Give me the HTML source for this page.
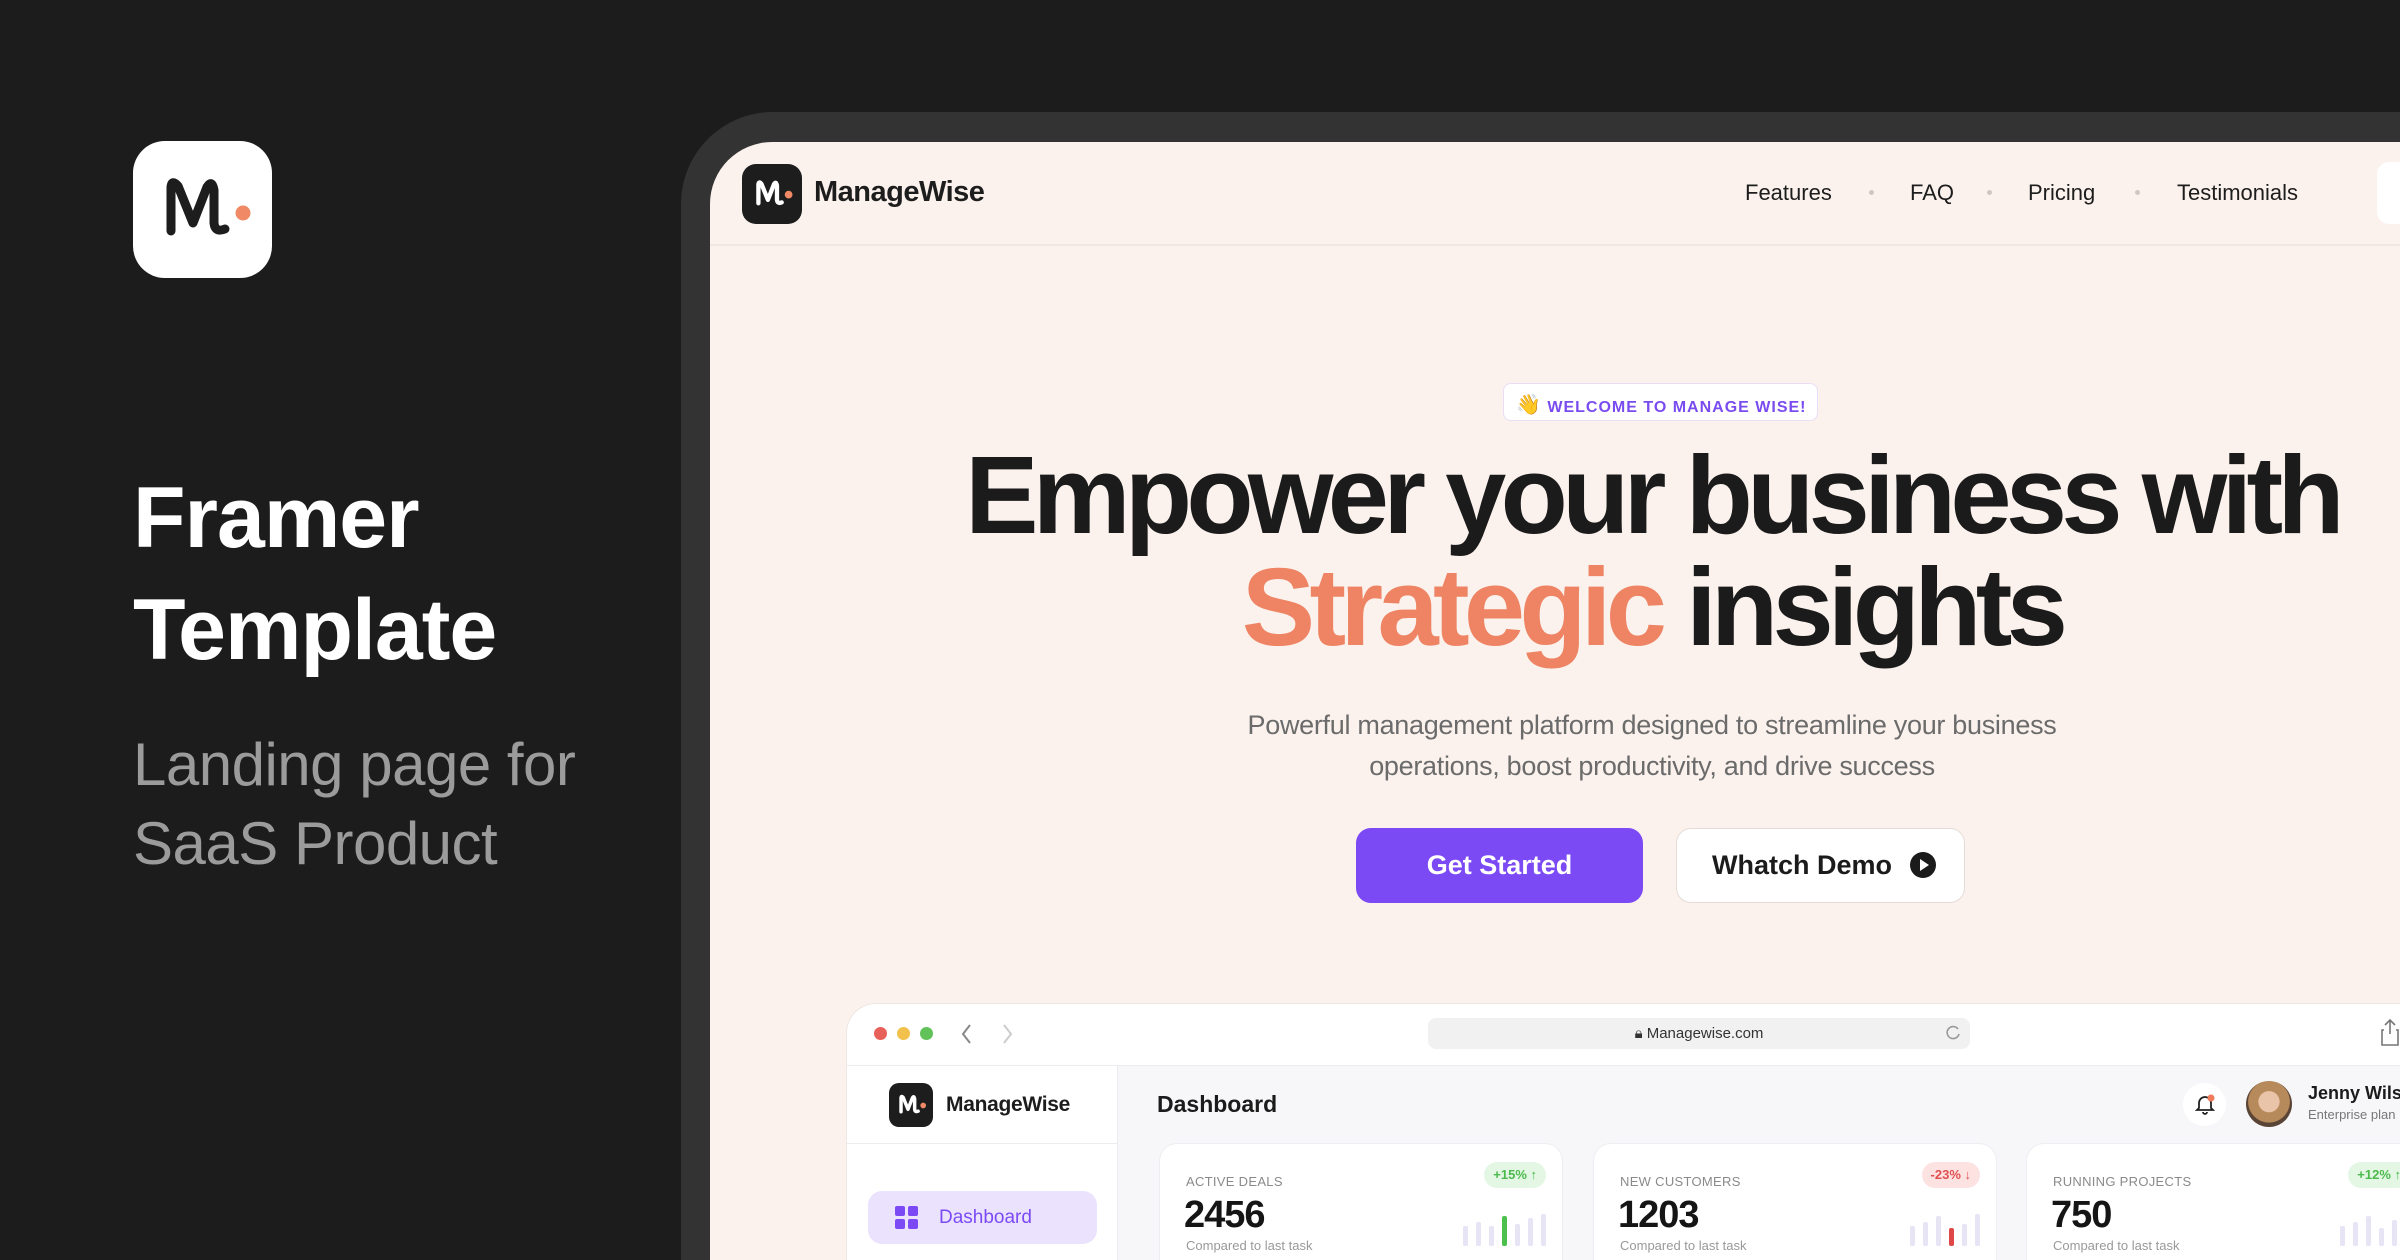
<!DOCTYPE html>
<html style="width:2400px;height:1260px;overflow:hidden"><head><meta charset="utf-8"><style>
*{margin:0;padding:0;box-sizing:border-box}
body{width:2400px;height:1260px;background:#1c1c1c;position:relative;overflow:hidden;font-family:"Liberation Sans",sans-serif}
.a{position:absolute}
.nav{font-size:22px;color:#1d1d1d;top:180px}
.dot{width:5px;height:5px;border-radius:50%;background:#cfc7c3;top:190px}
.card{background:#fff;border-radius:18px 18px 0 0;border:1px solid #eeeef2;border-bottom:none;width:404px;height:117px;top:1143px;overflow:hidden}
.lbl{font-size:13px;color:#8a8a8a;left:26px;top:30px;letter-spacing:.3px}
.num{font-size:38px;font-weight:bold;color:#151515;left:24px;top:50px;letter-spacing:-1px}
.cmp{font-size:13px;color:#999;left:26px;top:94px}
.pill{top:18px;right:16px;height:26px;border-radius:13px;font-size:13px;font-weight:bold;padding:5px 9px}
.bars{right:16px;top:68px;height:34px;display:flex;align-items:flex-end;gap:8px}
.bars i{display:block;width:5px;background:#e6e4f5;border-radius:2px}
</style></head><body>

<div class="a" style="left:133px;top:141px;width:139px;height:137px;background:#fff;border-radius:32px">
<svg width="139" height="137" viewBox="0 0 139 137"><path d="M38 90 L38 46 Q39 38 45 45 L60 82 L74 46 Q79 38 81 49 L81 82 Q82 92 92 88" fill="none" stroke="#1d1d1d" stroke-width="9" stroke-linecap="round" stroke-linejoin="round"/><circle cx="110" cy="72" r="7.5" fill="#f08a66"/></svg></div>

<div class="a" style="left:133px;top:462px;font-size:86px;line-height:112px;color:#fff;font-weight:bold;letter-spacing:-1px">Framer<br>Template</div>
<div class="a" style="left:133px;top:725px;font-size:60px;line-height:79px;color:#9b9b9b;letter-spacing:-.5px">Landing page for<br>SaaS Product</div>

<div class="a" style="left:681px;top:112px;width:1719px;height:1148px;background:#333;border-radius:92px 0 0 0"></div>
<div class="a" style="left:710px;top:142px;width:1690px;height:1118px;background:#fbf2ed;border-radius:62px 0 0 0"></div>

<div class="a" style="left:742px;top:164px;width:60px;height:60px;background:#1d1d1d;border-radius:14px">
<svg width="60" height="60" viewBox="0 0 139 137"><path d="M38 90 L38 46 Q39 38 45 45 L60 82 L74 46 Q79 38 81 49 L81 82 Q82 92 92 88" fill="none" stroke="#fff" stroke-width="10" stroke-linecap="round" stroke-linejoin="round"/><circle cx="108" cy="70" r="9" fill="#f08a66"/></svg></div>
<div class="a" style="left:814px;top:176px;font-size:29px;font-weight:bold;color:#1d1d1d;letter-spacing:-.5px">ManageWise</div>
<div class="a nav" style="left:1745px">Features</div>
<div class="a dot" style="left:1869px"></div>
<div class="a nav" style="left:1910px">FAQ</div>
<div class="a dot" style="left:1987px"></div>
<div class="a nav" style="left:2028px">Pricing</div>
<div class="a dot" style="left:2135px"></div>
<div class="a nav" style="left:2177px">Testimonials</div>
<div class="a" style="left:2377px;top:162px;width:23px;height:62px;background:#fff;border-radius:12px 0 0 12px"></div>
<div class="a" style="left:710px;top:244px;width:1690px;height:2px;background:#f1e7e2"></div>

<div class="a" style="left:1503px;top:383px;width:315px;height:38px;background:#fff;border:1px solid #e8def7;border-radius:8px;font-size:16px;font-weight:bold;color:#7a4cf0;padding:9px 0 0 12px;letter-spacing:1px;white-space:nowrap"><span style="font-size:20px;position:relative;top:-1px">👋</span> WELCOME TO MANAGE WISE!</div>

<div class="a" style="left:852px;width:1600px;top:440px;text-align:center;font-size:110px;line-height:112px;font-weight:bold;color:#1b1b1b;letter-spacing:-5.7px;white-space:nowrap">Empower your business with<br><span style="color:#ee8463">Strategic</span> insights</div>

<div class="a" style="left:1052px;width:1200px;top:705px;text-align:center;font-size:27px;line-height:41px;color:#6b6b6b;letter-spacing:-.3px">Powerful management platform designed to streamline your business<br>operations, boost productivity, and drive success</div>

<div class="a" style="left:1356px;top:828px;width:287px;height:75px;background:#7b4af5;border-radius:15px;color:#fff;font-size:27px;font-weight:bold;text-align:center;line-height:75px">Get Started</div>
<div class="a" style="left:1676px;top:828px;width:289px;height:75px;background:#fff;border:1.5px solid #e4dcd8;border-radius:15px;color:#1b1b1b;font-size:27px;font-weight:bold;line-height:72px;padding-left:35px">Whatch Demo <span style="display:inline-block;width:26px;height:26px;border-radius:50%;background:#1b1b1b;vertical-align:-4px;margin-left:10px;position:relative"><span style="position:absolute;left:10px;top:7px;border-left:9px solid #fff;border-top:6px solid transparent;border-bottom:6px solid transparent"></span></span></div>

<div class="a" style="left:846px;top:1003px;width:1554px;height:257px;background:#fff;border-radius:30px 0 0 0;border:1px solid #efe7e3;border-bottom:none;border-right:none;overflow:hidden">
 <div class="a" style="left:0;top:61px;width:1554px;height:196px;background:#f7f7f9;border-top:1px solid #ececef"></div>
 <div class="a" style="left:0;top:62px;width:271px;height:195px;background:#fff;border-right:1px solid #ececef"></div>
</div>
<div class="a" style="left:874px;top:1027px;width:13px;height:13px;border-radius:50%;background:#e8605a"></div>
<div class="a" style="left:897px;top:1027px;width:13px;height:13px;border-radius:50%;background:#f2c14b"></div>
<div class="a" style="left:920px;top:1027px;width:13px;height:13px;border-radius:50%;background:#62c25a"></div>
<svg class="a" style="left:960px;top:1022px" width="60" height="24"><path d="M10 3 L3 12 L10 21" stroke="#888" stroke-width="2" fill="none"/><path d="M44 3 L51 12 L44 21" stroke="#ccc" stroke-width="2" fill="none"/></svg>
<div class="a" style="left:1428px;top:1018px;width:542px;height:31px;background:#f1f1f2;border-radius:8px;text-align:center;font-size:15px;color:#333;line-height:31px">🔒︎ Managewise.com</div>
<svg class="a" style="left:1944px;top:1024px" width="18" height="18"><path d="M14 5 A6 6 0 1 0 15 10" stroke="#999" stroke-width="1.6" fill="none"/></svg>
<svg class="a" style="left:2380px;top:1018px" width="20" height="30"><path d="M10 2 V16 M5 7 L10 2 L15 7 M4 12 H2 V27 H18 V12 H16" stroke="#777" stroke-width="1.6" fill="none"/></svg>

<div class="a" style="left:889px;top:1083px;width:44px;height:44px;background:#1d1d1d;border-radius:10px">
<svg width="44" height="44" viewBox="0 0 139 137"><path d="M38 90 L38 46 Q39 38 45 45 L60 82 L74 46 Q79 38 81 49 L81 82 Q82 92 92 88" fill="none" stroke="#fff" stroke-width="11" stroke-linecap="round" stroke-linejoin="round"/><circle cx="108" cy="70" r="9" fill="#f08a66"/></svg></div>
<div class="a" style="left:946px;top:1093px;font-size:21px;font-weight:bold;color:#1d1d1d;letter-spacing:-.3px">ManageWise</div>
<div class="a" style="left:847px;top:1143px;width:270px;height:1px;background:#ececef"></div>
<div class="a" style="left:868px;top:1191px;width:229px;height:53px;background:#ebe3fd;border-radius:14px"></div>
<svg class="a" style="left:895px;top:1206px" width="24" height="24"><rect x="0" y="0" width="10" height="10" rx="2" fill="#7b4af5"/><rect x="13" y="0" width="10" height="10" rx="2" fill="#7b4af5"/><rect x="0" y="13" width="10" height="10" rx="2" fill="#7b4af5"/><rect x="13" y="13" width="10" height="10" rx="2" fill="#7b4af5"/></svg>
<div class="a" style="left:939px;top:1207px;font-size:19px;color:#7b4af5">Dashboard</div>

<div class="a" style="left:1157px;top:1091px;font-size:23px;font-weight:bold;color:#1b1b1b">Dashboard</div>
<div class="a" style="left:2183px;top:1083px;width:43px;height:43px;background:#fff;border-radius:50%"></div>
<svg class="a" style="left:2194px;top:1093px" width="22" height="22"><path d="M5 15 V10 A6 6 0 0 1 17 10 V15 L19 17 H3 Z M9 19 A2 2 0 0 0 13 19" stroke="#222" stroke-width="1.8" fill="none"/><circle cx="17" cy="5" r="3.5" fill="#f07a5a"/></svg>
<div class="a" style="left:2246px;top:1081px;width:46px;height:46px;border-radius:50%;background:radial-gradient(circle at 50% 45%,#e9c4a8 0 30%,#b78a5c 32% 60%,#5a4436 62%)"></div>
<div class="a" style="left:2308px;top:1083px;font-size:18px;font-weight:bold;color:#1b1b1b;white-space:nowrap;width:92px;overflow:hidden">Jenny Wilson</div>
<div class="a" style="left:2308px;top:1107px;font-size:13px;color:#777;white-space:nowrap;width:92px;overflow:hidden">Enterprise plan</div>

<div class="a card" style="left:1159px"><div class="a lbl">ACTIVE DEALS</div><div class="a pill" style="background:#e4f7e4;color:#4cba4c">+15% ↑</div><div class="a num">2456</div><div class="a cmp">Compared to last task</div>
<div class="a bars"><i style="height:20px"></i><i style="height:24px"></i><i style="height:20px"></i><i style="height:30px;background:#4cc04c"></i><i style="height:22px"></i><i style="height:28px"></i><i style="height:32px"></i></div></div>
<div class="a card" style="left:1593px"><div class="a lbl">NEW CUSTOMERS</div><div class="a pill" style="background:#fde2e2;color:#e05050">-23% ↓</div><div class="a num">1203</div><div class="a cmp">Compared to last task</div>
<div class="a bars"><i style="height:20px"></i><i style="height:24px"></i><i style="height:30px"></i><i style="height:18px;background:#e04848"></i><i style="height:22px"></i><i style="height:32px"></i></div></div>
<div class="a card" style="left:2026px;width:374px;border-radius:18px 0 0 0;border-right:none"><div class="a lbl">RUNNING PROJECTS</div><div class="a pill" style="right:-10px;background:#e4f7e4;color:#4cba4c">+12% ↑</div><div class="a num">750</div><div class="a cmp">Compared to last task</div>
<div class="a bars" style="right:-10px"><i style="height:20px"></i><i style="height:24px"></i><i style="height:30px"></i><i style="height:18px"></i><i style="height:26px"></i><i style="height:32px"></i></div></div>

</body></html>
